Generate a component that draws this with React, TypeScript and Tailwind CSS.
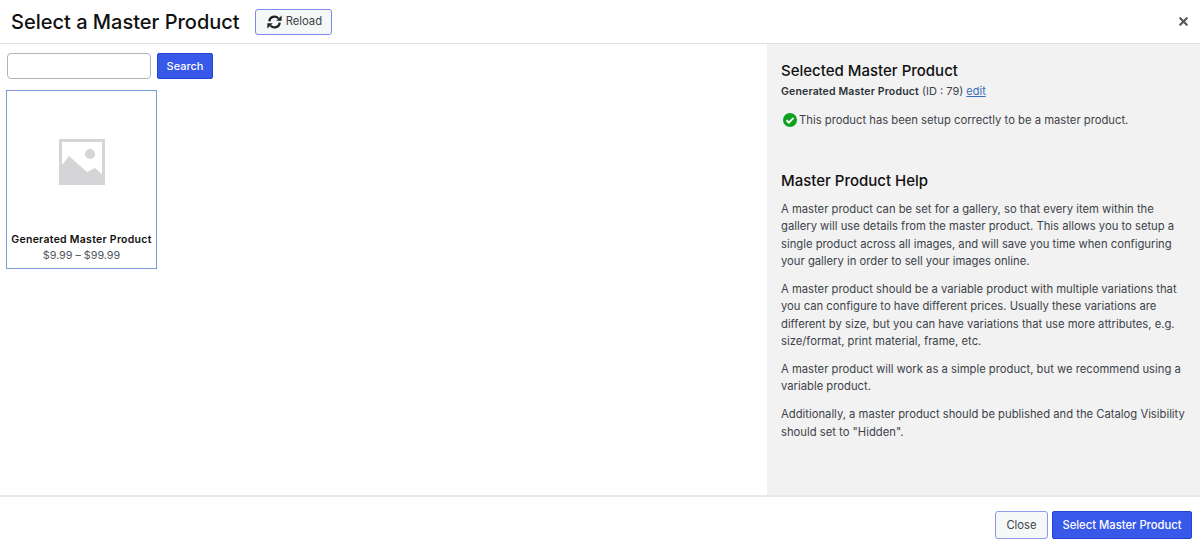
import { X } from 'lucide-react';

function ReloadIcon() {
  return (
    <svg width="15" height="14" viewBox="0 0 15 14" aria-hidden className="shrink-0">
      <path d="M2.3 6.4A5.2 5.2 0 0 1 11.4 3.4" fill="none" stroke="#1d2327" strokeWidth="2.2" />
      <path d="M12.7 7.6A5.2 5.2 0 0 1 3.6 10.6" fill="none" stroke="#1d2327" strokeWidth="2.2" />
      <path d="M9.2 5.8h5.4V.6z" fill="#1d2327" />
      <path d="M5.8 8.2H.4v5.2z" fill="#1d2327" />
    </svg>
  );
}

function PlaceholderIcon() {
  return (
    <svg width="46" height="46" viewBox="0 0 46 46" aria-hidden>
      <path fill="#d5d5d7" fillRule="evenodd" d="M0 0h46v46H0z M3 3v23l7-9 18 16 8-4 7 6V3z" />
      <circle cx="31" cy="15" r="5" fill="#d5d5d7" />
    </svg>
  );
}

function CheckBadge() {
  return (
    <svg width="14" height="14" viewBox="0 0 16 16" aria-hidden className="shrink-0">
      <circle cx="8" cy="8" r="8" fill="#0ea01f" />
      <path d="M4 8.3l2.7 2.7L12 5.6" fill="none" stroke="#fff" strokeWidth="2.2" />
    </svg>
  );
}

export default function App() {
  return (
    <div className="flex h-[544px] w-[1200px] flex-col overflow-hidden bg-white font-['Inter',sans-serif] text-[#1e1e1e]">
      <header className="flex h-[44px] shrink-0 items-center border-b border-[#e0e0e0] pl-[11px] pr-[10px]">
        <h1 className="text-[20px] font-medium leading-none text-[#111]">Select a Master Product</h1>
        <button className="ml-[15px] flex h-[26px] w-[77px] items-center gap-[4px] rounded-[3px] border border-[#7b88ec] bg-[#f6f7f7] pl-[11px] text-[11.25px] text-[#3c434a]">
          <ReloadIcon />
          Reload
        </button>
        <button className="ml-auto text-[#50575e]" aria-label="Close">
          <X size={13} strokeWidth={4} />
        </button>
      </header>

      <div className="flex min-h-0 flex-1">
        <main className="flex-1 pl-[6px] pt-[9px]">
          <div className="flex items-center gap-[6px] pl-px">
            <input className="h-[26px] w-[144px] rounded-[4px] border border-[#b4b4b4] bg-white" />
            <button className="h-[26px] w-[56px] rounded-[2px] border border-[#2145d6] bg-[#3858e9] text-[11px] font-medium text-white">
              Search
            </button>
          </div>
          <div className="mt-[11px] flex h-[179px] w-[151px] flex-col items-center border border-[#7a9bd8] bg-white">
            <div className="mt-[48px]">
              <PlaceholderIcon />
            </div>
            <p className="mt-[48px] text-[10.5px] font-semibold leading-[14px] tracking-[0.27px] text-[#111]">Generated Master Product</p>
            <p className="mt-[1px] text-[10.75px] leading-[15px] text-[#50575e]">$9.99 – $99.99</p>
          </div>
        </main>

        <aside className="w-[433px] shrink-0 bg-[#f2f2f2] pl-[14px] pr-[12px] pt-[18px] text-[11.25px] leading-[17.33px] text-[#3c434a]">
          <h2 className="text-[15px] font-medium leading-[18px] text-[#111]">Selected Master Product</h2>
          <p className="mt-[2px] text-[11px] leading-[18px]">
            <span className="text-[10.5px] font-semibold tracking-[0.17px] text-[#2c3338]">Generated Master Product</span> (ID : 79){' '}
            <a href="#" className="text-[#3a6fb8] underline">edit</a>
          </p>
          <div className="mt-[10px] flex h-[18px] items-center gap-[2px] pl-[2px]">
            <CheckBadge />
            <span className="pt-[2px]">This product has been setup correctly to be a master product.</span>
          </div>
          <h2 className="mt-[43px] text-[15px] font-medium leading-[18px] text-[#111]">Master Product Help</h2>
          <p className="mt-[11px]">
            A master product can be set for a gallery, so that every item within the gallery will use details from the master product. This allows you to setup a single product across all images, and will save you time when configuring your gallery in order to sell your images online.
          </p>
          <p className="mt-[10.67px]">
            A master product should be a variable product with multiple variations that you can configure to have different prices. Usually these variations are different by size, but you can have variations that use more attributes, e.g. size/format, print material, frame, etc.
          </p>
          <p className="mt-[10.67px]">
            A master product will work as a simple product, but we recommend using a variable product.
          </p>
          <p className="mt-[10.67px]">
            Additionally, a master product should be published and the Catalog Visibility should set to "Hidden".
          </p>
        </aside>
      </div>

      <footer className="flex h-[49px] shrink-0 items-start justify-end gap-[4px] border-t-2 border-[#e8e8e8] pr-[8px] pt-[14px]">
        <button className="h-[28px] w-[53px] rounded-[3px] border border-[#8d98ee] bg-[#f6f7f7] text-[11.25px] text-[#3c434a]">Close</button>
        <button className="h-[28px] w-[140px] rounded-[2px] border border-[#2145d6] bg-[#3858e9] text-[11.25px] font-medium text-white">Select Master Product</button>
      </footer>
    </div>
  );
}
